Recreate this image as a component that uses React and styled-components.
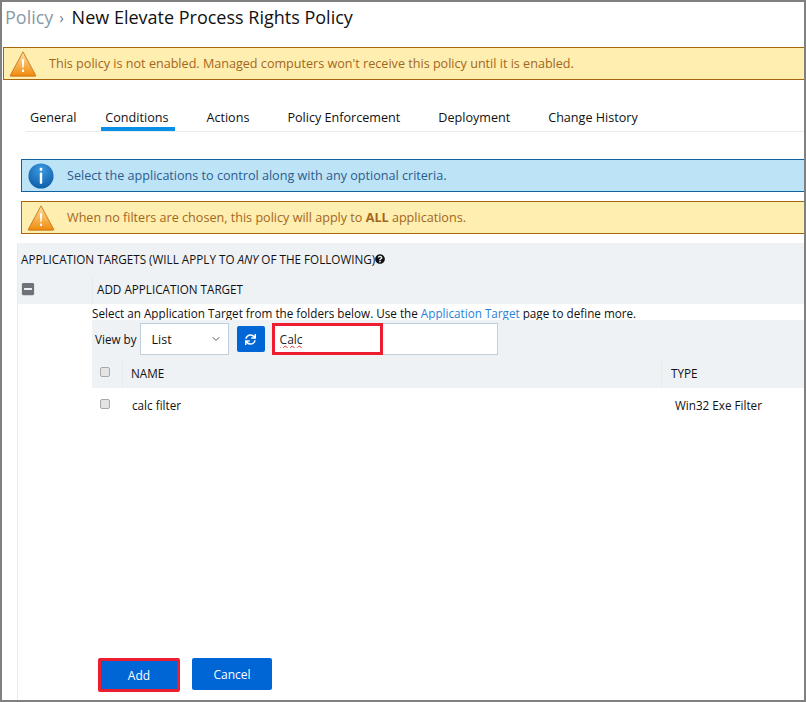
import React from 'react';
import styled, { createGlobalStyle } from 'styled-components';
import { FaSync, FaQuestionCircle, FaMinusSquare } from 'react-icons/fa';
import { LuChevronDown } from 'react-icons/lu';

const GlobalStyle = createGlobalStyle`
  html, body {
    margin: 0;
    padding: 0;
    background: white;
  }
  * {
    box-sizing: border-box;
  }
`;

const TABS = ['General', 'Conditions', 'Actions', 'Policy Enforcement', 'Deployment', 'Change History'];

const Frame = styled.div`
  border: 2px solid #808080;
  color: #111;
  display: flex;
  flex-direction: column;
  font-family: 'Open Sans', sans-serif;
  font-size: 12px;
  height: 702px;
  overflow: hidden;
  width: 806px;
`;

const Breadcrumb = styled.h1`
  align-items: center;
  display: flex;
  font-size: 18px;
  font-weight: 400;
  height: 30px;
  margin: 0 0 15px 3px;
`;

const Crumb = styled.span`
  color: #8a99a8;
`;

const Separator = styled.span`
  color: #66727f;
  font-size: 14px;
  margin: 0 8px 0 6px;
`;

const Banner = styled.div`
  align-items: center;
  background: ${props => (props.kind === 'info' ? '#bde3f6' : '#feeeb0')};
  border: 1px solid ${props => (props.kind === 'info' ? '#1160a0' : '#a8660c')};
  border-right: 0;
  color: ${props => (props.kind === 'info' ? '#2c5c8e' : '#a3661c')};
  display: flex;
  font-size: 12.6px;
  height: 33px;
  margin-left: ${props => props.indent}px;
  margin-bottom: ${props => props.gap}px;
`;

const BannerIcon = styled.svg`
  flex: none;
  height: ${props => props.size}px;
  margin: 0 ${props => props.after}px 0 ${props => props.before}px;
  width: ${props => props.size}px;
`;

const Tabs = styled.nav`
  border-bottom: 1px solid #e8eaec;
  display: flex;
  gap: 27px;
  height: 36px;
  margin: 16px 0 27px 24px;
`;

const Tab = styled.div`
  border-bottom: 4px solid ${props => (props.active ? '#0a8fe6' : 'transparent')};
  font-size: 12.6px;
  height: 35px;
  line-height: 16px;
  padding: 14px 7px 0 4px;
  white-space: nowrap;

  &:first-child {
    margin-right: -9px;
  }
`;

const Body = styled.div`
  border-left: 1px solid #e8eaec;
  display: flex;
  flex: 1;
  flex-direction: column;
  margin-left: 15px;
`;

const TargetsHeader = styled.div`
  background: #eff2f5;
  height: 61px;
`;

const TargetsTitle = styled.div`
  align-items: center;
  display: flex;
  font-size: 11.7px;
  height: 32px;
  padding-left: 3px;
  white-space: nowrap;
`;

const HelpIcon = styled(FaQuestionCircle)`
  font-size: 10px;
`;

const AddRow = styled.div`
  align-items: center;
  display: flex;
  font-size: 11.7px;
  height: 29px;
  padding-bottom: 1px;
`;

const CollapseCell = styled.div`
  align-items: center;
  border-right: 1px solid #e8eaec;
  color: #6f7377;
  display: flex;
  height: 100%;
  padding-left: 3px;
  width: 75px;
`;

const AddLabel = styled.span`
  padding-left: 4px;
`;

const Panel = styled.div`
  display: flex;
  flex: 1;
  flex-direction: column;
  margin-left: 74px;
`;

const Hint = styled.div`
  font-size: 11.7px;
  height: 16px;
  line-height: 18px;
  white-space: nowrap;
`;

const HintLink = styled.a`
  color: #2a82d7;
`;

const Toolbar = styled.div`
  align-items: center;
  background: #eff2f5;
  display: flex;
  font-size: 11.7px;
  height: 38px;
  padding-left: 3px;
`;

const ViewLabel = styled.span`
  margin-right: 3px;
`;

const SelectBox = styled.div`
  align-items: center;
  background: white;
  border: 1px solid #bfcedb;
  display: flex;
  font-size: 12.5px;
  height: 32px;
  justify-content: space-between;
  padding: 0 6px 0 11px;
  width: 89px;
`;

const RefreshButton = styled.button`
  align-items: center;
  background: #0066d6;
  border: 0;
  border-radius: 2px;
  color: white;
  display: flex;
  font-size: 11px;
  height: 26px;
  justify-content: center;
  margin: 0 7px 0 8px;
  padding: 0;
  width: 28px;
`;

const SearchWrap = styled.div`
  position: relative;
`;

const SearchInput = styled.input`
  background: white;
  border: 1px solid #bfcedb;
  color: #222;
  display: block;
  font-family: inherit;
  font-size: 12px;
  height: 32px;
  outline: 0;
  padding: 0 7px;
  text-decoration: underline wavy #e0302c 1px;
  width: 226px;
`;

const Callout = styled.div`
  border: 3px solid #ed1c2e;
  height: 32px;
  left: 0;
  pointer-events: none;
  position: absolute;
  top: 0;
  width: 111px;
`;

const Table = styled.div`
  display: grid;
  grid-template-columns: 30px 539px 1fr;
`;

const HeadCell = styled.div`
  align-items: center;
  background: #eff2f5;
  border-left: ${props => (props.divided ? '1px solid #e8eaec' : '0')};
  display: flex;
  font-size: 11.7px;
  height: 30px;
  padding-left: ${props => props.inset}px;
`;

const RowCell = styled.div`
  align-items: center;
  display: flex;
  font-size: 11.7px;
  height: 34px;
  padding-left: ${props => props.inset}px;
`;

const CheckBox = styled.span`
  background: #e4e4e4;
  border: 1px solid #a9a9a9;
  border-radius: 2px;
  display: block;
  height: 10px;
  margin-bottom: 2px;
  width: 10px;
`;

const Actions = styled.div`
  align-items: flex-start;
  display: flex;
  gap: 12px;
  margin-top: auto;
  padding: 0 0 8px 6px;
`;

const ActionButton = styled.button`
  background: #0066d6;
  border: ${props => (props.marked ? '3px solid #ed1c2e' : '0')};
  border-radius: 2px;
  color: white;
  font-family: inherit;
  font-size: 12px;
  height: ${props => (props.marked ? '34px' : '32px')};
  padding: 0;
  width: ${props => (props.marked ? '82px' : '80px')};
`;

const WarningIcon = ({ before, after }) => (
  <BannerIcon viewBox="0 0 30 30" size={28} before={before} after={after}>
    <defs>
      <linearGradient id="warnFill" x1="0" y1="0" x2="0" y2="1">
        <stop offset="0" stopColor="#ffe2a6" />
        <stop offset="1" stopColor="#f08a0a" />
      </linearGradient>
    </defs>
    <path d="M15 2 L28.5 27 Q29 28 28 28 L2 28 Q1 28 1.5 27 Z" fill="url(#warnFill)" stroke="#c9771a" strokeWidth="1" />
    <path d="M13.8 10 H16.2 L15.7 19 H14.3 Z" fill="#fff" />
    <rect x="13.9" y="21" width="2.2" height="2.6" fill="#fff" />
  </BannerIcon>
);

const InfoIcon = ({ before, after }) => (
  <BannerIcon viewBox="0 0 30 30" size={26} before={before} after={after}>
    <defs>
      <radialGradient id="infoFill" cx="0.5" cy="0.25" r="0.8">
        <stop offset="0" stopColor="#3d9ae0" />
        <stop offset="1" stopColor="#0c5aa6" />
      </radialGradient>
    </defs>
    <circle cx="15" cy="15" r="14.5" fill="url(#infoFill)" />
    <rect x="13.5" y="5.5" width="3" height="3.4" rx="1" fill="#fff" />
    <rect x="13.6" y="11" width="2.8" height="13" rx="1" fill="#fff" />
  </BannerIcon>
);

const App = () => (
  <Frame>
    <GlobalStyle />
    <Breadcrumb>
      <Crumb>Policy</Crumb>
      <Separator>›</Separator>
      New Elevate Process Rights Policy
    </Breadcrumb>
    <Banner kind="warning" indent={1} gap={0}>
      <WarningIcon before={5} after={12} />
      This policy is not enabled. Managed computers won't receive this policy until it is enabled.
    </Banner>
    <Tabs>
      {TABS.map(tab => (
        <Tab key={tab} active={tab === 'Conditions'}>
          {tab}
        </Tab>
      ))}
    </Tabs>
    <Banner kind="info" indent={19} gap={9}>
      <InfoIcon before={6} after={13} />
      Select the applications to control along with any optional criteria.
    </Banner>
    <Banner kind="warning" indent={19} gap={9}>
      <WarningIcon before={5} after={12} />
      <span>
        When no filters are chosen, this policy will apply to <strong>ALL</strong> applications.
      </span>
    </Banner>
    <Body>
      <TargetsHeader>
        <TargetsTitle>
          APPLICATION TARGETS (WILL APPLY TO&nbsp;<em>ANY</em>&nbsp;OF THE FOLLOWING)
          <HelpIcon />
        </TargetsTitle>
        <AddRow>
          <CollapseCell>
            <FaMinusSquare size={14} />
          </CollapseCell>
          <AddLabel>ADD APPLICATION TARGET</AddLabel>
        </AddRow>
      </TargetsHeader>
      <Panel>
        <Hint>
          Select an Application Target from the folders below. Use the <HintLink>Application Target</HintLink> page to
          define more.
        </Hint>
        <Toolbar>
          <ViewLabel>View by</ViewLabel>
          <SelectBox>
            List
            <LuChevronDown size={12} color="#555" />
          </SelectBox>
          <RefreshButton>
            <FaSync />
          </RefreshButton>
          <SearchWrap>
            <SearchInput defaultValue="Calc" readOnly />
            <Callout />
          </SearchWrap>
        </Toolbar>
        <Table>
          <HeadCell inset={8}>
            <CheckBox />
          </HeadCell>
          <HeadCell divided inset={8}>
            NAME
          </HeadCell>
          <HeadCell divided inset={9}>
            TYPE
          </HeadCell>
          <RowCell inset={8}>
            <CheckBox />
          </RowCell>
          <RowCell inset={10}>calc filter</RowCell>
          <RowCell inset={14}>Win32 Exe Filter</RowCell>
        </Table>
        <Actions>
          <ActionButton marked>Add</ActionButton>
          <ActionButton>Cancel</ActionButton>
        </Actions>
      </Panel>
    </Body>
  </Frame>
);

export default App;
